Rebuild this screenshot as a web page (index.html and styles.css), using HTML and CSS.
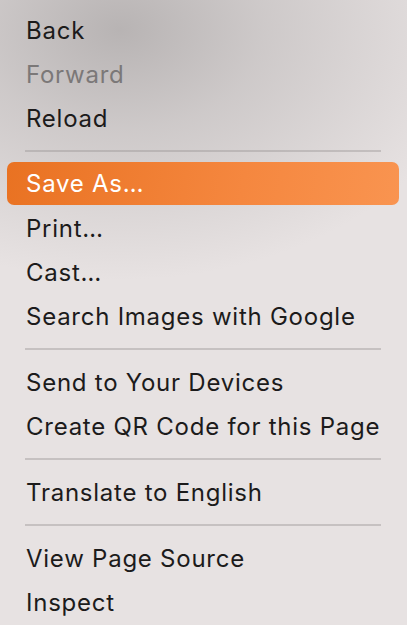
FILE: index.html
```html
<!DOCTYPE html>
<html>
<head>
<meta charset="utf-8">
<link rel="stylesheet" href="styles.css">
</head>
<body>
<div class="menu">
  <div class="item">Back</div>
  <div class="item disabled">Forward</div>
  <div class="item">Reload</div>
  <div class="sep"></div>
  <div class="item active">Save As…</div>
  <div class="item">Print…</div>
  <div class="item">Cast…</div>
  <div class="item">Search Images with Google</div>
  <div class="sep"></div>
  <div class="item">Send to Your Devices</div>
  <div class="item">Create QR Code for this Page</div>
  <div class="sep"></div>
  <div class="item">Translate to English</div>
  <div class="sep"></div>
  <div class="item">View Page Source</div>
  <div class="item">Inspect</div>
</div>
</body>
</html>
```
FILE: styles.css
```css
html, body {
  margin: 0;
  padding: 0;
  width: 407px;
  height: 625px;
  overflow: hidden;
}
body {
  background:
    radial-gradient(ellipse 360px 250px at 120px 30px, rgba(172,168,168,0.8) 0%, rgba(185,181,181,0.55) 40%, rgba(231,226,226,0) 100%),
    #e7e2e2;
  font-family: Inter, "Noto Sans", sans-serif;
}
.menu {
  display: flex;
  flex-direction: column;
  padding: 8px 8px 0 7px;
}
.item {
  height: 44px;
  display: flex;
  align-items: center;
  padding-left: 19px;
  font-size: 24px;
  color: #1c1b1b;
  border-radius: 7px;
  letter-spacing: 0.75px;
}
.item.disabled {
  color: #7b7878;
}
.item.active {
  height: 43px;
  margin-bottom: 1px;
  color: #ffffff;
  background: linear-gradient(100deg, #e97222 0%, #f5873f 60%, #f99450 100%);
}
.sep {
  height: 22px;
  display: flex;
  align-items: center;
  padding: 0 18px 0 18px;
}
.sep::before {
  content: "";
  display: block;
  width: 100%;
  height: 2px;
  background: rgba(150,145,145,0.4);
}
```
